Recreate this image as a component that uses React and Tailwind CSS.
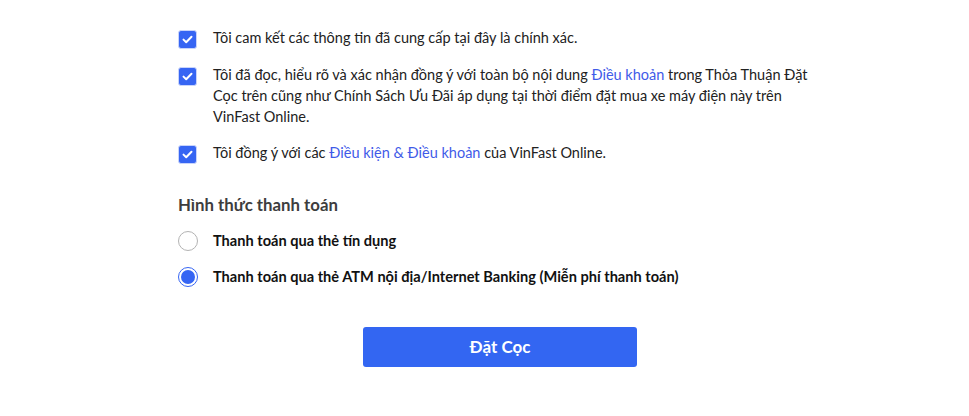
import React, { useState } from 'react';

function Check({ checked }) {
  return (
    <span className="mt-[3px] flex h-[19px] w-[19px] shrink-0 items-center justify-center rounded-[3px] border border-[#c9d4fb] bg-[#3665f3]">
      {checked && (
        <svg width="11" height="9" viewBox="0 0 11 9" fill="none">
          <path d="M1.5 4.6 L4.2 7.2 L9.5 1.8" stroke="white" strokeWidth="2" strokeLinecap="round" strokeLinejoin="round" />
        </svg>
      )}
    </span>
  );
}

function Radio({ checked }) {
  if (checked) {
    return (
      <span className="flex h-[20px] w-[20px] shrink-0 items-center justify-center rounded-full border-[1.5px] border-[#3665f3] bg-white">
        <span className="h-[14px] w-[14px] rounded-full bg-[#3665f3]" />
      </span>
    );
  }
  return <span className="h-[20px] w-[20px] shrink-0 rounded-full border-[1.5px] border-[#b3b3b3] bg-white" />;
}

const Link = ({ children }) => <span className="text-[#3f5be8]">{children}</span>;

export default function App() {
  const [method, setMethod] = useState(1);
  const methods = [
    'Thanh toán qua thẻ tín dụng',
    'Thanh toán qua thẻ ATM nội địa/Internet Banking (Miễn phí thanh toán)',
  ];

  return (
    <div className="h-[416px] w-[969px] bg-white pt-[27px] font-['Lato',sans-serif] text-[14.5px] text-[#222]">
      <div className="ml-[178px] w-[650px]">
        <div className="flex flex-col gap-[15px] leading-[21px]">
          <label className="flex gap-[16px]">
            <Check checked />
            <span>Tôi cam kết các thông tin đã cung cấp tại đây là chính xác.</span>
          </label>
          <label className="flex gap-[16px]">
            <Check checked />
            <span>
              Tôi đã đọc, hiểu rõ và xác nhận đồng ý với toàn bộ nội dung <Link>Điều khoản</Link> trong Thỏa Thuận Đặt
              <br />
              Cọc trên cũng như Chính Sách Ưu Đãi áp dụng tại thời điểm đặt mua xe máy điện này trên
              <br />
              VinFast Online.
            </span>
          </label>
          <label className="flex gap-[16px]">
            <Check checked />
            <span>
              Tôi đồng ý với các <Link>Điều kiện &amp; Điều khoản</Link> của VinFast Online.
            </span>
          </label>
        </div>

        <h3 className="mt-[29px] text-[16.8px] font-bold leading-[24px] text-[#3d3d3d]">Hình thức thanh toán</h3>

        <div className="mt-[14px] flex flex-col gap-[16px]">
          {methods.map((m, i) => (
            <button key={i} onClick={() => setMethod(i)} className="flex h-[20px] items-center gap-[15px] text-left">
              <Radio checked={method === i} />
              <span className="text-[14.6px] font-bold leading-[20px] text-[#111]">{m}</span>
            </button>
          ))}
        </div>
      </div>

      <div className="mt-[40px] flex justify-center">
        <button className="ml-[31px] h-[40px] w-[274px] rounded-[3px] bg-[#3366f2] text-[17px] font-bold text-white">
          Đặt Cọc
        </button>
      </div>
    </div>
  );
}
